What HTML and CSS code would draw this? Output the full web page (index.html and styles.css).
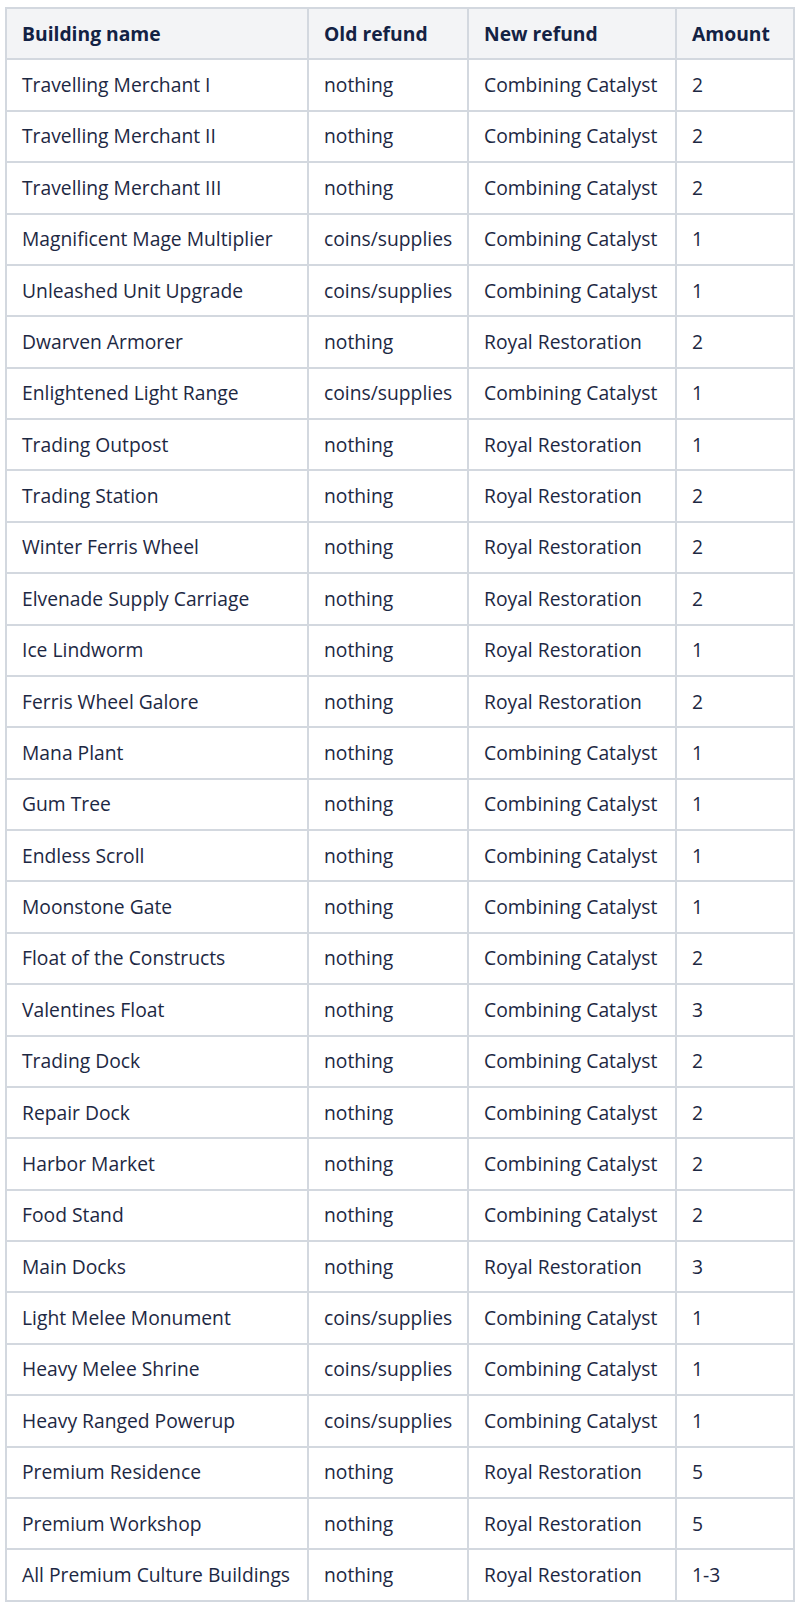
FILE: index.html
```html
<!DOCTYPE html>
<html lang="en">
<head>
<meta charset="utf-8">
<title>Refunds</title>
<link rel="stylesheet" href="styles.css">
</head>
<body>
<div class="wrap">
<table class="refunds">
<colgroup>
<col class="c1"><col class="c2"><col class="c3"><col class="c4">
</colgroup>
<thead>
<tr><th>Building name</th><th>Old refund</th><th>New refund</th><th>Amount</th></tr>
</thead>
<tbody>
<tr><td>Travelling Merchant I</td><td>nothing</td><td>Combining Catalyst</td><td>2</td></tr>
<tr><td>Travelling Merchant II</td><td>nothing</td><td>Combining Catalyst</td><td>2</td></tr>
<tr><td>Travelling Merchant III</td><td>nothing</td><td>Combining Catalyst</td><td>2</td></tr>
<tr><td>Magnificent Mage Multiplier</td><td>coins/supplies</td><td>Combining Catalyst</td><td>1</td></tr>
<tr><td>Unleashed Unit Upgrade</td><td>coins/supplies</td><td>Combining Catalyst</td><td>1</td></tr>
<tr><td>Dwarven Armorer</td><td>nothing</td><td>Royal Restoration</td><td>2</td></tr>
<tr><td>Enlightened Light Range</td><td>coins/supplies</td><td>Combining Catalyst</td><td>1</td></tr>
<tr><td>Trading Outpost</td><td>nothing</td><td>Royal Restoration</td><td>1</td></tr>
<tr><td>Trading Station</td><td>nothing</td><td>Royal Restoration</td><td>2</td></tr>
<tr><td>Winter Ferris Wheel</td><td>nothing</td><td>Royal Restoration</td><td>2</td></tr>
<tr><td>Elvenade Supply Carriage</td><td>nothing</td><td>Royal Restoration</td><td>2</td></tr>
<tr><td>Ice Lindworm</td><td>nothing</td><td>Royal Restoration</td><td>1</td></tr>
<tr><td>Ferris Wheel Galore</td><td>nothing</td><td>Royal Restoration</td><td>2</td></tr>
<tr><td>Mana Plant</td><td>nothing</td><td>Combining Catalyst</td><td>1</td></tr>
<tr><td>Gum Tree</td><td>nothing</td><td>Combining Catalyst</td><td>1</td></tr>
<tr><td>Endless Scroll</td><td>nothing</td><td>Combining Catalyst</td><td>1</td></tr>
<tr><td>Moonstone Gate</td><td>nothing</td><td>Combining Catalyst</td><td>1</td></tr>
<tr><td>Float of the Constructs</td><td>nothing</td><td>Combining Catalyst</td><td>2</td></tr>
<tr><td>Valentines Float</td><td>nothing</td><td>Combining Catalyst</td><td>3</td></tr>
<tr><td>Trading Dock</td><td>nothing</td><td>Combining Catalyst</td><td>2</td></tr>
<tr><td>Repair Dock</td><td>nothing</td><td>Combining Catalyst</td><td>2</td></tr>
<tr><td>Harbor Market</td><td>nothing</td><td>Combining Catalyst</td><td>2</td></tr>
<tr><td>Food Stand</td><td>nothing</td><td>Combining Catalyst</td><td>2</td></tr>
<tr><td>Main Docks</td><td>nothing</td><td>Royal Restoration</td><td>3</td></tr>
<tr><td>Light Melee Monument</td><td>coins/supplies</td><td>Combining Catalyst</td><td>1</td></tr>
<tr><td>Heavy Melee Shrine</td><td>coins/supplies</td><td>Combining Catalyst</td><td>1</td></tr>
<tr><td>Heavy Ranged Powerup</td><td>coins/supplies</td><td>Combining Catalyst</td><td>1</td></tr>
<tr><td>Premium Residence</td><td>nothing</td><td>Royal Restoration</td><td>5</td></tr>
<tr><td>Premium Workshop</td><td>nothing</td><td>Royal Restoration</td><td>5</td></tr>
<tr><td>All Premium Culture Buildings</td><td>nothing</td><td>Royal Restoration</td><td>1-3</td></tr>
</tbody>
</table>
</div>
</body>
</html>
```

FILE: styles.css
```css
html, body {
  margin: 0;
  padding: 0;
  background: #ffffff;
}

.wrap {
  padding: 7px 0 0 5px;
}

.refunds {
  border-collapse: collapse;
  table-layout: fixed;
  width: 788px;
  font-family: "Open Sans", "Noto Sans", sans-serif;
  font-size: 19.3px;
  color: #1d2843;
}

.c1 { width: 302px; }
.c2 { width: 160px; }
.c3 { width: 208px; }
.c4 { width: 118px; }

.refunds th,
.refunds td {
  border: 2px solid #d3d8df;
  padding: 10.7px 15px;
  line-height: 28px;
  text-align: left;
  vertical-align: middle;
  white-space: nowrap;
}

.refunds th {
  background: #f3f4f6;
  font-weight: 700;
  color: #132244;
}
```
